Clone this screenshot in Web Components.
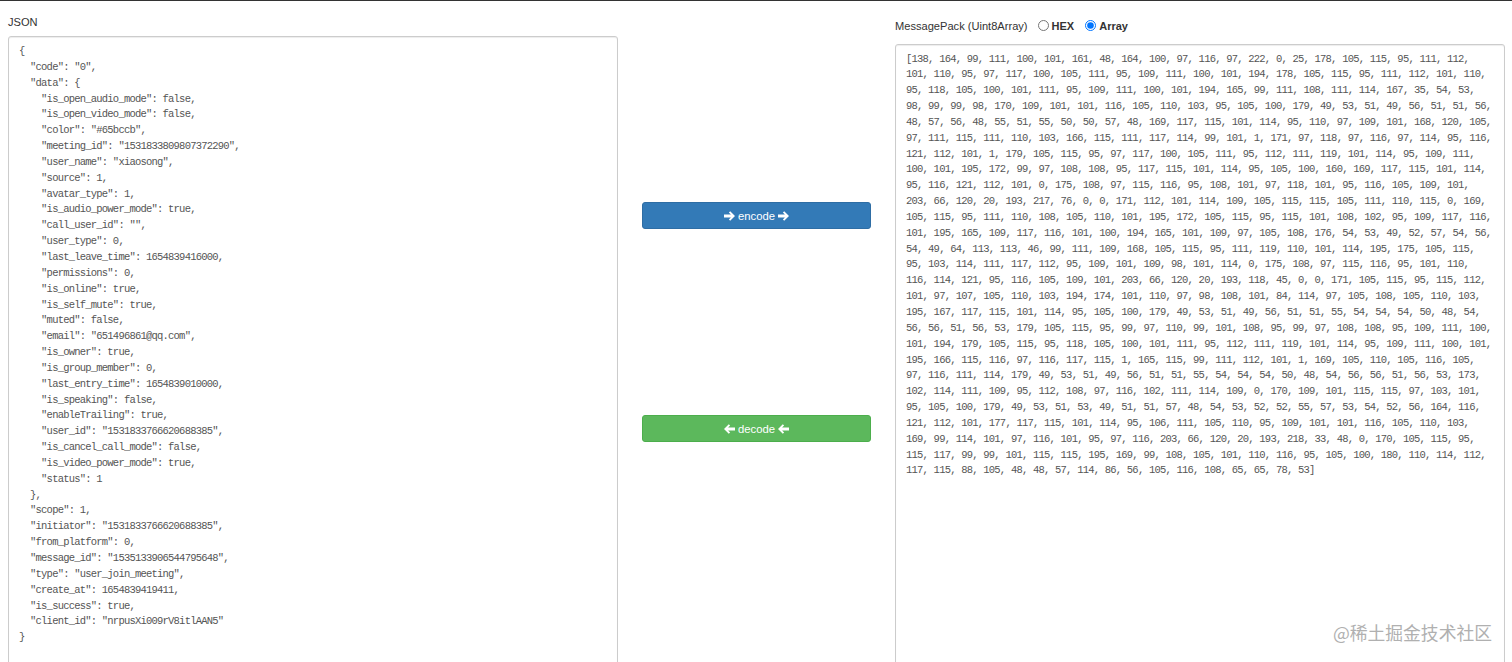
<!DOCTYPE html>
<html lang="zh">
<head>
<meta charset="utf-8">
<title>MessagePack</title>
<style>
html,body{margin:0;padding:0;height:662px;overflow:hidden;background:#fff}
body{font-family:"Liberation Sans",Arial,sans-serif;font-size:11.1px;color:#333}
</style>
</head>
<body>
<template id="t-app">
<style>
:host{display:grid;grid-template-columns:610px 1fr 610px;box-sizing:border-box;height:662px;padding:0 7px 0 8px;border-top:1px solid #333;overflow:hidden;position:relative}
</style>
<slot></slot>
</template>
<template id="t-panel">
<style>
:host{display:flex;flex-direction:column;min-width:0;padding-top:var(--top,14px)}
.head{display:flex;align-items:center;height:var(--head,15px);margin-bottom:var(--gap,7px);white-space:nowrap}
</style>
<div class="head"><slot name="head"></slot></div>
<slot></slot>
</template>
<template id="t-code"><style>
:host{display:block;box-sizing:border-box;height:720px;border:1px solid #ccc;border-radius:3px;padding:var(--pt,4px) 10px 0 10px;box-shadow:inset 0 1px 1px rgba(0,0,0,.075);font-family:"Liberation Mono","DejaVu Sans Mono",monospace;font-size:10.5px;letter-spacing:-.78px;line-height:15.85px;color:#555;white-space:pre;overflow:hidden}
</style><slot></slot></template>
<template id="t-actions">
<style>
:host{display:flex;flex-direction:column;gap:186px;padding:201px 24px 0}
</style>
<slot></slot>
</template>
<template id="t-btn">
<style>
:host{display:flex;align-items:center;justify-content:center;gap:3px;height:27px;border-radius:3px;color:#fff;background:var(--bg);box-sizing:border-box;border:1px solid var(--bd);font-size:11.3px;cursor:pointer}
svg{width:11px;height:10px;fill:#fff;display:block}
</style>
<svg viewBox="0 0 11 10" aria-hidden="true"><path d="M6.2 0.2 11 5 6.2 9.8 4.9 8.5 6.9 6.4H0V3.6H6.9L4.9 1.5Z"/></svg>
<span><slot></slot></span>
<svg viewBox="0 0 11 10" aria-hidden="true"><path d="M6.2 0.2 11 5 6.2 9.8 4.9 8.5 6.9 6.4H0V3.6H6.9L4.9 1.5Z"/></svg>
</template>
<template id="t-radio">
<style>
:host{display:inline-flex;align-items:center;gap:3px;font-weight:700;font-size:11px;color:#333}
input{width:11px;height:11px;margin:0 0 2px}
</style>
<input type="radio" name="fmt">
<slot></slot>
</template>
<template id="t-mark">
<style>
:host{position:absolute;right:20px;bottom:17px;font-family:"Noto Sans CJK SC",sans-serif;font-size:17.8px;line-height:26px;color:#b0b0b0;white-space:nowrap}
</style>
<slot></slot>
</template>

<mp-app>
<mp-panel style="--top:13px;--head:16px;--gap:6px">
<span slot="head">JSON</span>
<mp-code style="--pt:7px">{
  "code": "0",
  "data": {
    "is_open_audio_mode": false,
    "is_open_video_mode": false,
    "color": "#65bccb",
    "meeting_id": "1531833809807372290",
    "user_name": "xiaosong",
    "source": 1,
    "avatar_type": 1,
    "is_audio_power_mode": true,
    "call_user_id": "",
    "user_type": 0,
    "last_leave_time": 1654839416000,
    "permissions": 0,
    "is_online": true,
    "is_self_mute": true,
    "muted": false,
    "email": "651496861@qq.com",
    "is_owner": true,
    "is_group_member": 0,
    "last_entry_time": 1654839010000,
    "is_speaking": false,
    "enableTrailing": true,
    "user_id": "1531833766620688385",
    "is_cancel_call_mode": false,
    "is_video_power_mode": true,
    "status": 1
  },
  "scope": 1,
  "initiator": "1531833766620688385",
  "from_platform": 0,
  "message_id": "1535133906544795648",
  "type": "user_join_meeting",
  "create_at": 1654839419411,
  "is_success": true,
  "client_id": "nrpusXi009rV8itlAAN5"
}</mp-code>
</mp-panel>
<mp-actions>
<mp-button kind="encode">encode</mp-button>
<mp-button kind="decode">decode</mp-button>
</mp-actions>
<mp-panel style="--top:17px;--head:16px;--gap:10px">
<span slot="head" style="display:inline-flex;align-items:center;gap:10px"><span>MessagePack (Uint8Array)</span><span style="display:inline-flex;gap:11px"><mp-radio>HEX</mp-radio><mp-radio checked>Array</mp-radio></span></span>
<mp-code style="--pt:6.5px">[138, 164, 99, 111, 100, 101, 161, 48, 164, 100, 97, 116, 97, 222, 0, 25, 178, 105, 115, 95, 111, 112,
101, 110, 95, 97, 117, 100, 105, 111, 95, 109, 111, 100, 101, 194, 178, 105, 115, 95, 111, 112, 101, 110,
95, 118, 105, 100, 101, 111, 95, 109, 111, 100, 101, 194, 165, 99, 111, 108, 111, 114, 167, 35, 54, 53,
98, 99, 99, 98, 170, 109, 101, 101, 116, 105, 110, 103, 95, 105, 100, 179, 49, 53, 51, 49, 56, 51, 51, 56,
48, 57, 56, 48, 55, 51, 55, 50, 50, 57, 48, 169, 117, 115, 101, 114, 95, 110, 97, 109, 101, 168, 120, 105,
97, 111, 115, 111, 110, 103, 166, 115, 111, 117, 114, 99, 101, 1, 171, 97, 118, 97, 116, 97, 114, 95, 116,
121, 112, 101, 1, 179, 105, 115, 95, 97, 117, 100, 105, 111, 95, 112, 111, 119, 101, 114, 95, 109, 111,
100, 101, 195, 172, 99, 97, 108, 108, 95, 117, 115, 101, 114, 95, 105, 100, 160, 169, 117, 115, 101, 114,
95, 116, 121, 112, 101, 0, 175, 108, 97, 115, 116, 95, 108, 101, 97, 118, 101, 95, 116, 105, 109, 101,
203, 66, 120, 20, 193, 217, 76, 0, 0, 171, 112, 101, 114, 109, 105, 115, 115, 105, 111, 110, 115, 0, 169,
105, 115, 95, 111, 110, 108, 105, 110, 101, 195, 172, 105, 115, 95, 115, 101, 108, 102, 95, 109, 117, 116,
101, 195, 165, 109, 117, 116, 101, 100, 194, 165, 101, 109, 97, 105, 108, 176, 54, 53, 49, 52, 57, 54, 56,
54, 49, 64, 113, 113, 46, 99, 111, 109, 168, 105, 115, 95, 111, 119, 110, 101, 114, 195, 175, 105, 115,
95, 103, 114, 111, 117, 112, 95, 109, 101, 109, 98, 101, 114, 0, 175, 108, 97, 115, 116, 95, 101, 110,
116, 114, 121, 95, 116, 105, 109, 101, 203, 66, 120, 20, 193, 118, 45, 0, 0, 171, 105, 115, 95, 115, 112,
101, 97, 107, 105, 110, 103, 194, 174, 101, 110, 97, 98, 108, 101, 84, 114, 97, 105, 108, 105, 110, 103,
195, 167, 117, 115, 101, 114, 95, 105, 100, 179, 49, 53, 51, 49, 56, 51, 51, 55, 54, 54, 54, 50, 48, 54,
56, 56, 51, 56, 53, 179, 105, 115, 95, 99, 97, 110, 99, 101, 108, 95, 99, 97, 108, 108, 95, 109, 111, 100,
101, 194, 179, 105, 115, 95, 118, 105, 100, 101, 111, 95, 112, 111, 119, 101, 114, 95, 109, 111, 100, 101,
195, 166, 115, 116, 97, 116, 117, 115, 1, 165, 115, 99, 111, 112, 101, 1, 169, 105, 110, 105, 116, 105,
97, 116, 111, 114, 179, 49, 53, 51, 49, 56, 51, 51, 55, 54, 54, 54, 50, 48, 54, 56, 56, 51, 56, 53, 173,
102, 114, 111, 109, 95, 112, 108, 97, 116, 102, 111, 114, 109, 0, 170, 109, 101, 115, 115, 97, 103, 101,
95, 105, 100, 179, 49, 53, 51, 53, 49, 51, 51, 57, 48, 54, 53, 52, 52, 55, 57, 53, 54, 52, 56, 164, 116,
121, 112, 101, 177, 117, 115, 101, 114, 95, 106, 111, 105, 110, 95, 109, 101, 101, 116, 105, 110, 103,
169, 99, 114, 101, 97, 116, 101, 95, 97, 116, 203, 66, 120, 20, 193, 218, 33, 48, 0, 170, 105, 115, 95,
115, 117, 99, 99, 101, 115, 115, 195, 169, 99, 108, 105, 101, 110, 116, 95, 105, 100, 180, 110, 114, 112,
117, 115, 88, 105, 48, 48, 57, 114, 86, 56, 105, 116, 108, 65, 65, 78, 53]</mp-code>
</mp-panel>
<mp-mark>@稀土掘金技术社区</mp-mark>
</mp-app>

<script>
function define(name, tpl, init){
  customElements.define(name, class extends HTMLElement{
    constructor(){
      super();
      this.attachShadow({mode:"open"}).appendChild(document.getElementById(tpl).content.cloneNode(true));
    }
    connectedCallback(){ if(init) init(this, this.shadowRoot); }
  });
}
define("mp-app","t-app");
define("mp-panel","t-panel");
define("mp-code","t-code");
define("mp-actions","t-actions");
define("mp-mark","t-mark");
define("mp-button","t-btn",function(el,root){
  var enc = el.getAttribute("kind")==="encode";
  el.style.setProperty("--bg", enc ? "#337ab7" : "#5cb85c");
  el.style.setProperty("--bd", enc ? "#2e6da4" : "#4cae4c");
  if(!enc) root.querySelectorAll("svg").forEach(function(s){ s.style.transform="scaleX(-1)"; });
});
define("mp-radio","t-radio",function(el,root){
  if(el.hasAttribute("checked")) root.querySelector("input").checked=true;
});
</script>
</body>
</html>
